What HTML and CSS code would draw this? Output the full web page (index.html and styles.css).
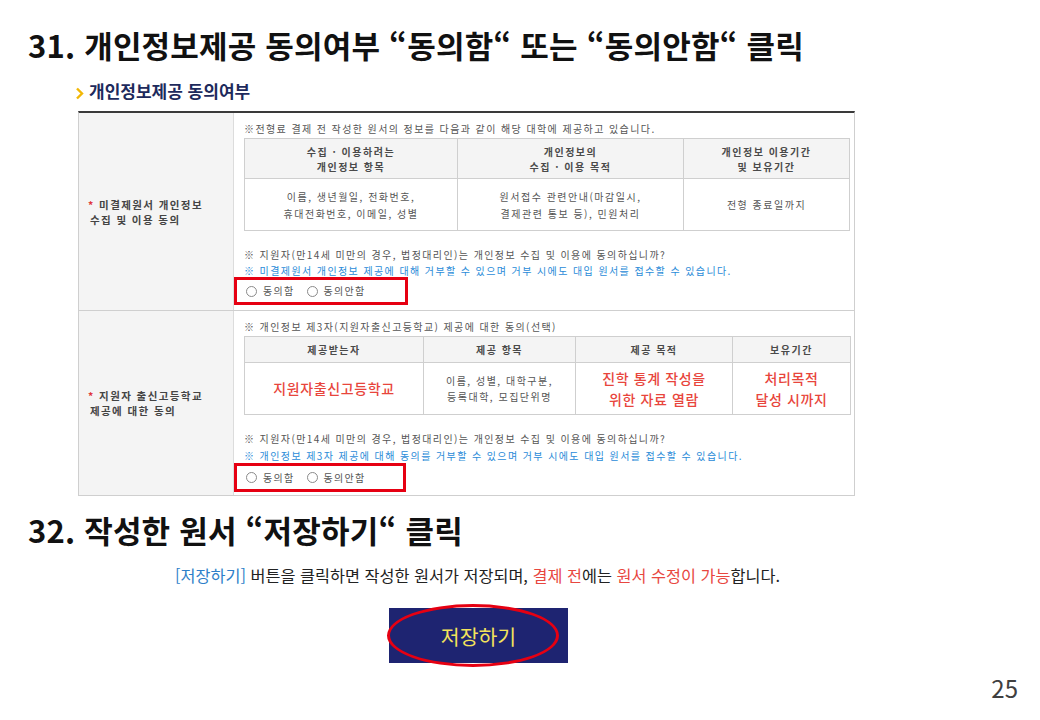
FILE: index.html
```html
<!DOCTYPE html>
<html lang="ko">
<head>
<meta charset="utf-8">
<link rel="stylesheet" href="styles.css">
</head>
<body>
<div class="page">
  <h1 class="title">31. 개인정보제공 동의여부 “동의함“ 또는 “동의안함“ 클릭</h1>
  <div class="subhead">
    <svg class="chev" width="9" height="13" viewBox="0 0 9 13"><polyline points="2,1.5 7,6.5 2,11.5" fill="none" stroke="#f2b705" stroke-width="2.4"/></svg>
    <span>개인정보제공 동의여부</span>
  </div>

  <div class="consent">
    <div class="row">
      <div class="label"><div><span class="star">*</span> 미결제원서 개인정보<br><span class="indent">수집 및 이용 동의</span></div></div>
      <div class="content">
        <p class="note">※전형료 결제 전 작성한 원서의 정보를 다음과 같이 해당 대학에 제공하고 있습니다.</p>
        <table class="info t1">
          <tr>
            <th class="c1">수집 · 이용하려는<br>개인정보 항목</th>
            <th class="c2">개인정보의<br>수집 · 이용 목적</th>
            <th class="c3">개인정보 이용기간<br>및 보유기간</th>
          </tr>
          <tr>
            <td>이름, 생년월일, 전화번호,<br>휴대전화번호, 이메일, 성별</td>
            <td>원서접수 관련안내(마감일시,<br>결제관련 통보 등), 민원처리</td>
            <td>전형 종료일까지</td>
          </tr>
        </table>
        <p class="note q">※ 지원자(만14세 미만의 경우, 법정대리인)는 개인정보 수집 및 이용에 동의하십니까?</p>
        <p class="note blue">※ 미결제원서 개인정보 제공에 대해 거부할 수 있으며 거부 시에도 대입 원서를 접수할 수 있습니다.</p>
        <div class="radios r1">
          <span class="radio"></span><span class="rlabel">동의함</span>
          <span class="radio"></span><span class="rlabel">동의안함</span>
        </div>
      </div>
    </div>

    <div class="row">
      <div class="label"><div><span class="star">*</span> 지원자 출신고등학교<br><span class="indent">제공에 대한 동의</span></div></div>
      <div class="content c-second">
        <p class="note">※ 개인정보 제3자(지원자출신고등학교) 제공에 대한 동의(선택)</p>
        <table class="info t2">
          <tr>
            <th class="d1">제공받는자</th>
            <th class="d2">제공 항목</th>
            <th class="d3">제공 목적</th>
            <th class="d4">보유기간</th>
          </tr>
          <tr>
            <td class="big">지원자출신고등학교</td>
            <td>이름, 성별, 대학구분,<br>등록대학, 모집단위명</td>
            <td class="big">진학 통계 작성을<br>위한 자료 열람</td>
            <td class="big">처리목적<br>달성 시까지</td>
          </tr>
        </table>
        <p class="note q">※ 지원자(만14세 미만의 경우, 법정대리인)는 개인정보 수집 및 이용에 동의하십니까?</p>
        <p class="note blue b2">※ 개인정보 제3자 제공에 대해 동의를 거부할 수 있으며 거부 시에도 대입 원서를 접수할 수 있습니다.</p>
        <div class="radios r2">
          <span class="radio"></span><span class="rlabel">동의함</span>
          <span class="radio"></span><span class="rlabel">동의안함</span>
        </div>
      </div>
    </div>
  </div>

  <h2 class="title t32">32. 작성한 원서 “저장하기“ 클릭</h2>
  <p class="desc"><span class="blue-t">[저장하기]</span> 버튼을 클릭하면 작성한 원서가 저장되며, <span class="red-t">결제 전</span>에는 <span class="red-t">원서 수정이 가능</span>합니다.</p>
  <div class="btn-row">
    <div class="save-btn">저장하기<span class="ellipse"></span></div>
  </div>
  <div class="pageno">25</div>
</div>
</body>
</html>
```
FILE: styles.css
```css
html, body {
  margin: 0;
  padding: 0;
  background: #ffffff;
}
body {
  font-family: "Noto Sans CJK KR", "Noto Sans", sans-serif;
  color: #222;
}
.page {
  width: 1040px;
  height: 720px;
  overflow: hidden;
}
.title {
  margin: 0;
  padding: 25px 0 0 28px;
  font-size: 31px;
  line-height: 40px;
  font-weight: 700;
  letter-spacing: 0.2px;
  color: #111;
  white-space: nowrap;
}
.subhead {
  margin-top: 16px;
  padding-left: 75px;
  height: 20px;
  display: flex;
  align-items: center;
  gap: 5px;
  font-size: 17px;
  font-weight: 700;
  color: #1d2a5c;
  line-height: 20px;
}
.chev {
  margin-top: 4px;
}
.consent {
  margin: 10px 0 0 78px;
  width: 777px;
  box-sizing: border-box;
  border-top: 2px solid #3a3a3a;
  border-left: 1px solid #cfcfcf;
  border-right: 1px solid #cfcfcf;
}
.row {
  display: grid;
  grid-template-columns: 155px 1fr;
  border-bottom: 1px solid #cfcfcf;
}
.label {
  background: #f4f4f4;
  border-right: 1px solid #dcdcdc;
  display: flex;
  align-items: center;
  padding-left: 9px;
  font-size: 10.5px;
  font-weight: 700;
  letter-spacing: 1.4px;
  line-height: 15px;
  color: #444;
}
.star {
  color: #e0343a;
}
.indent {
  padding-left: 2px;
}
.content {
  padding: 9px 8px 5px 10px;
}
.content.c-second {
  padding-bottom: 3px;
}
.note {
  margin: 0;
  font-size: 10px;
  line-height: 14px;
  letter-spacing: 1.4px;
  color: #555;
  white-space: nowrap;
}
.note.q {
  margin-top: 17px;
}
.note.blue {
  margin-top: 2px;
  color: #2a8bd8;
}
.note.b2 {
  margin-top: 3px;
}
.info {
  margin-top: 2px;
  width: 602px;
  border-collapse: collapse;
  table-layout: fixed;
}
.info th, .info td {
  border: 1px solid #cfcfcf;
  padding: 0;
  text-align: center;
  font-size: 10px;
  letter-spacing: 1.5px;
  line-height: 15px;
  color: #555;
}
.info th {
  background: #f4f4f4;
  font-weight: 700;
  color: #4a4a4a;
}
.t1 th { height: 39px; }
.t1 td { height: 51px; line-height: 17px; }
.t2 th { height: 25px; }
.t2 td { height: 51px; line-height: 16px; }
.c1 { width: 212px; }
.c2 { width: 225px; }
.c3 { width: 165px; }
.d1 { width: 178px; }
.d2 { width: 151px; }
.d3 { width: 156px; }
.d4 { width: 117px; }
.info td.big {
  font-size: 14px;
  line-height: 20.5px;
  letter-spacing: 0.6px;
  color: #e8453c;
  font-weight: 500;
}
.radios {
  margin-top: -1px;
  margin-left: -10px;
  width: 174px;
  height: 28px;
  box-sizing: border-box;
  border: 3px solid #e60012;
  display: flex;
  align-items: center;
  padding-left: 9px;
}
.radios.r2 {
  margin-top: 0;
  width: 172px;
  height: 29px;
}
.radio {
  width: 11px;
  height: 11px;
  box-sizing: border-box;
  border: 1px solid #8a8a8a;
  border-radius: 50%;
  background: #fff;
  flex: none;
}
.rlabel {
  margin-left: 6px;
  margin-right: 12px;
  font-size: 10px;
  letter-spacing: 1.3px;
  color: #555;
  line-height: 14px;
}
.t32 {
  padding-top: 14px;
}
.desc {
  margin: 15px 0 0 175px;
  font-size: 16.3px;
  line-height: 20px;
  color: #222;
  white-space: nowrap;
}
.blue-t { color: #2e7fc9; }
.red-t { color: #e8473f; }
.btn-row {
  margin-top: 23px;
  padding-left: 389px;
  display: flex;
}
.save-btn {
  position: relative;
  width: 179px;
  height: 55px;
  background: #1e2471;
  color: #f3e35b;
  font-size: 20.5px;
  display: flex;
  align-items: center;
  justify-content: center;
  box-sizing: border-box;
}
.ellipse {
  position: absolute;
  left: -2px;
  top: -4px;
  width: 172px;
  height: 63px;
  box-sizing: border-box;
  border: 3px solid #e60012;
  border-radius: 50%;
}
.pageno {
  margin-top: 10px;
  padding-right: 22px;
  text-align: right;
  font-size: 24px;
  line-height: 30px;
  color: #404040;
}
```
